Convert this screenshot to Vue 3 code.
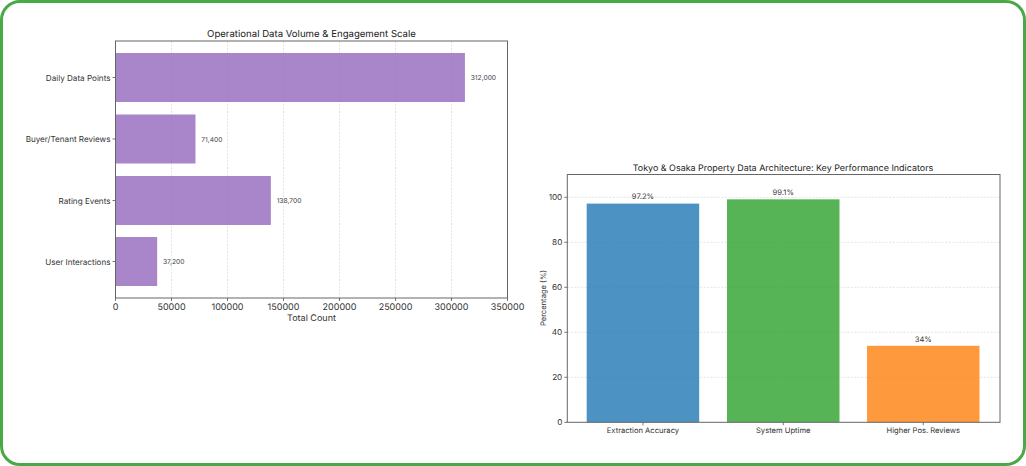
<script setup>
// left chart: page offset 20,20 / right chart: page offset 530,155
const hPlot = { x: 95.5, y: 21, w: 392, h: 257 }
const hScale = hPlot.w / 350000
const hTicks = [0, 50000, 100000, 150000, 200000, 250000, 300000, 350000]
const hBars = [
  { label: 'Daily Data Points', value: 312000, text: '312,000', y: 33 },
  { label: 'Buyer/Tenant Reviews', value: 71400, text: '71,400', y: 94.5 },
  { label: 'Rating Events', value: 138700, text: '138,700', y: 156 },
  { label: 'User Interactions', value: 37200, text: '37,200', y: 217 }
]

const vPlot = { x: 37.3, y: 19.5, w: 432.7, h: 247.8 }
const vScale = 2.25
const vTicks = [0, 20, 40, 60, 80, 100]
const vBars = [
  { label: 'Extraction Accuracy', value: 97.2, text: '97.2%', x: 56.7, color: '#1f77b4' },
  { label: 'System Uptime', value: 99.1, text: '99.1%', x: 197, color: '#2ca02c' },
  { label: 'Higher Pos. Reviews', value: 34, text: '34%', x: 337, color: '#ff7f0e' }
]
const vBarWidth = 112.5

function vy(value) {
  return vPlot.y + vPlot.h - value * vScale
}
</script>

<template>
  <div class="frame">
    <svg class="chart left" width="510" height="310">
      <text class="title" x="291.5" y="17" text-anchor="middle">Operational Data Volume &amp; Engagement Scale</text>
      <line v-for="t in hTicks" :key="'g' + t" class="grid" :x1="hPlot.x + t * hScale" :x2="hPlot.x + t * hScale" :y1="hPlot.y" :y2="hPlot.y + hPlot.h" />
      <g v-for="b in hBars" :key="b.label">
        <rect class="bar-purple" :x="hPlot.x" :y="b.y" :width="b.value * hScale" height="49" />
        <line class="tick" :x1="hPlot.x - 3" :x2="hPlot.x" :y1="b.y + 24.5" :y2="b.y + 24.5" />
        <text class="label cat" :x="hPlot.x - 5" :y="b.y + 27.5" text-anchor="end">{{ b.label }}</text>
        <text class="value" :x="hPlot.x + b.value * hScale + 5.8" :y="b.y + 27">{{ b.text }}</text>
      </g>
      <rect class="spine" :x="hPlot.x" :y="hPlot.y" :width="hPlot.w" :height="hPlot.h" />
      <g v-for="t in hTicks" :key="'t' + t">
        <line class="tick" :x1="hPlot.x + t * hScale" :x2="hPlot.x + t * hScale" :y1="hPlot.y + hPlot.h" :y2="hPlot.y + hPlot.h + 3" />
        <text class="label" :x="hPlot.x + t * hScale" :y="hPlot.y + hPlot.h + 11.5" text-anchor="middle">{{ t }}</text>
      </g>
      <text class="label" x="291.5" y="300.5" text-anchor="middle">Total Count</text>
    </svg>

    <svg class="chart right" width="480" height="290">
      <text class="title wide" x="253" y="15.5" text-anchor="middle">Tokyo &amp; Osaka Property Data Architecture: Key Performance Indicators</text>
      <g v-for="t in vTicks" :key="'g' + t">
        <line v-if="t > 0" class="grid" :x1="vPlot.x" :x2="vPlot.x + vPlot.w" :y1="vy(t)" :y2="vy(t)" />
        <line class="tick" :x1="vPlot.x - 3" :x2="vPlot.x" :y1="vy(t)" :y2="vy(t)" />
        <text class="label small" :x="vPlot.x - 5" :y="vy(t) + 3" text-anchor="end">{{ t }}</text>
      </g>
      <g v-for="b in vBars" :key="b.label">
        <rect :x="b.x" :y="vy(b.value)" :width="vBarWidth" :height="b.value * vScale" :fill="b.color" fill-opacity="0.8" />
        <text class="value dark" :x="b.x + vBarWidth / 2" :y="vy(b.value) - 4.2" text-anchor="middle">{{ b.text }}</text>
        <line class="tick" :x1="b.x + vBarWidth / 2" :x2="b.x + vBarWidth / 2" :y1="vPlot.y + vPlot.h" :y2="vPlot.y + vPlot.h + 3" />
        <text class="label xcat" :x="b.x + vBarWidth / 2" :y="vPlot.y + vPlot.h + 10.5" text-anchor="middle">{{ b.label }}</text>
      </g>
      <rect class="spine" :x="vPlot.x" :y="vPlot.y" :width="vPlot.w" :height="vPlot.h" />
      <text class="label xcat" transform="translate(15.5 143) rotate(-90)" text-anchor="middle">Percentage (%)</text>
    </svg>
  </div>
</template>

<style>
html,
body {
  margin: 0;
  background: #fff;
}
</style>

<style scoped>
.frame {
  width: 1026px;
  height: 466px;
  box-sizing: border-box;
  border: 3px solid #4aa947;
  border-radius: 20px;
  padding: 17px 13px 18px 17px;
  background: #fff;
  display: flex;
  justify-content: space-between;
  font-family: Inter, "Noto Sans", sans-serif;
  text-rendering: geometricPrecision;
}

.chart {
  display: block;
}

.left {
  align-self: flex-start;
}

.right {
  align-self: flex-end;
}

.title {
  font-size: 9.6px;
  fill: #222;
}

.wide {
  font-size: 8.95px;
}

.label {
  font-size: 9px;
  fill: #333;
}

.cat {
  font-size: 8.1px;
}

.small {
  font-size: 8.2px;
}

.xcat {
  font-size: 7.6px;
}

.value {
  font-size: 6.7px;
  fill: #444;
}

.dark {
  font-size: 7.6px;
  fill: #333;
}

.grid {
  stroke: #d8d8d8;
  stroke-width: 0.7;
  stroke-dasharray: 2 1.5;
}

.tick {
  stroke: #555;
  stroke-width: 0.8;
}

.spine {
  fill: none;
  stroke: #666;
  stroke-width: 1;
}

.bar-purple {
  fill: #9467bd;
  fill-opacity: 0.8;
}
</style>
